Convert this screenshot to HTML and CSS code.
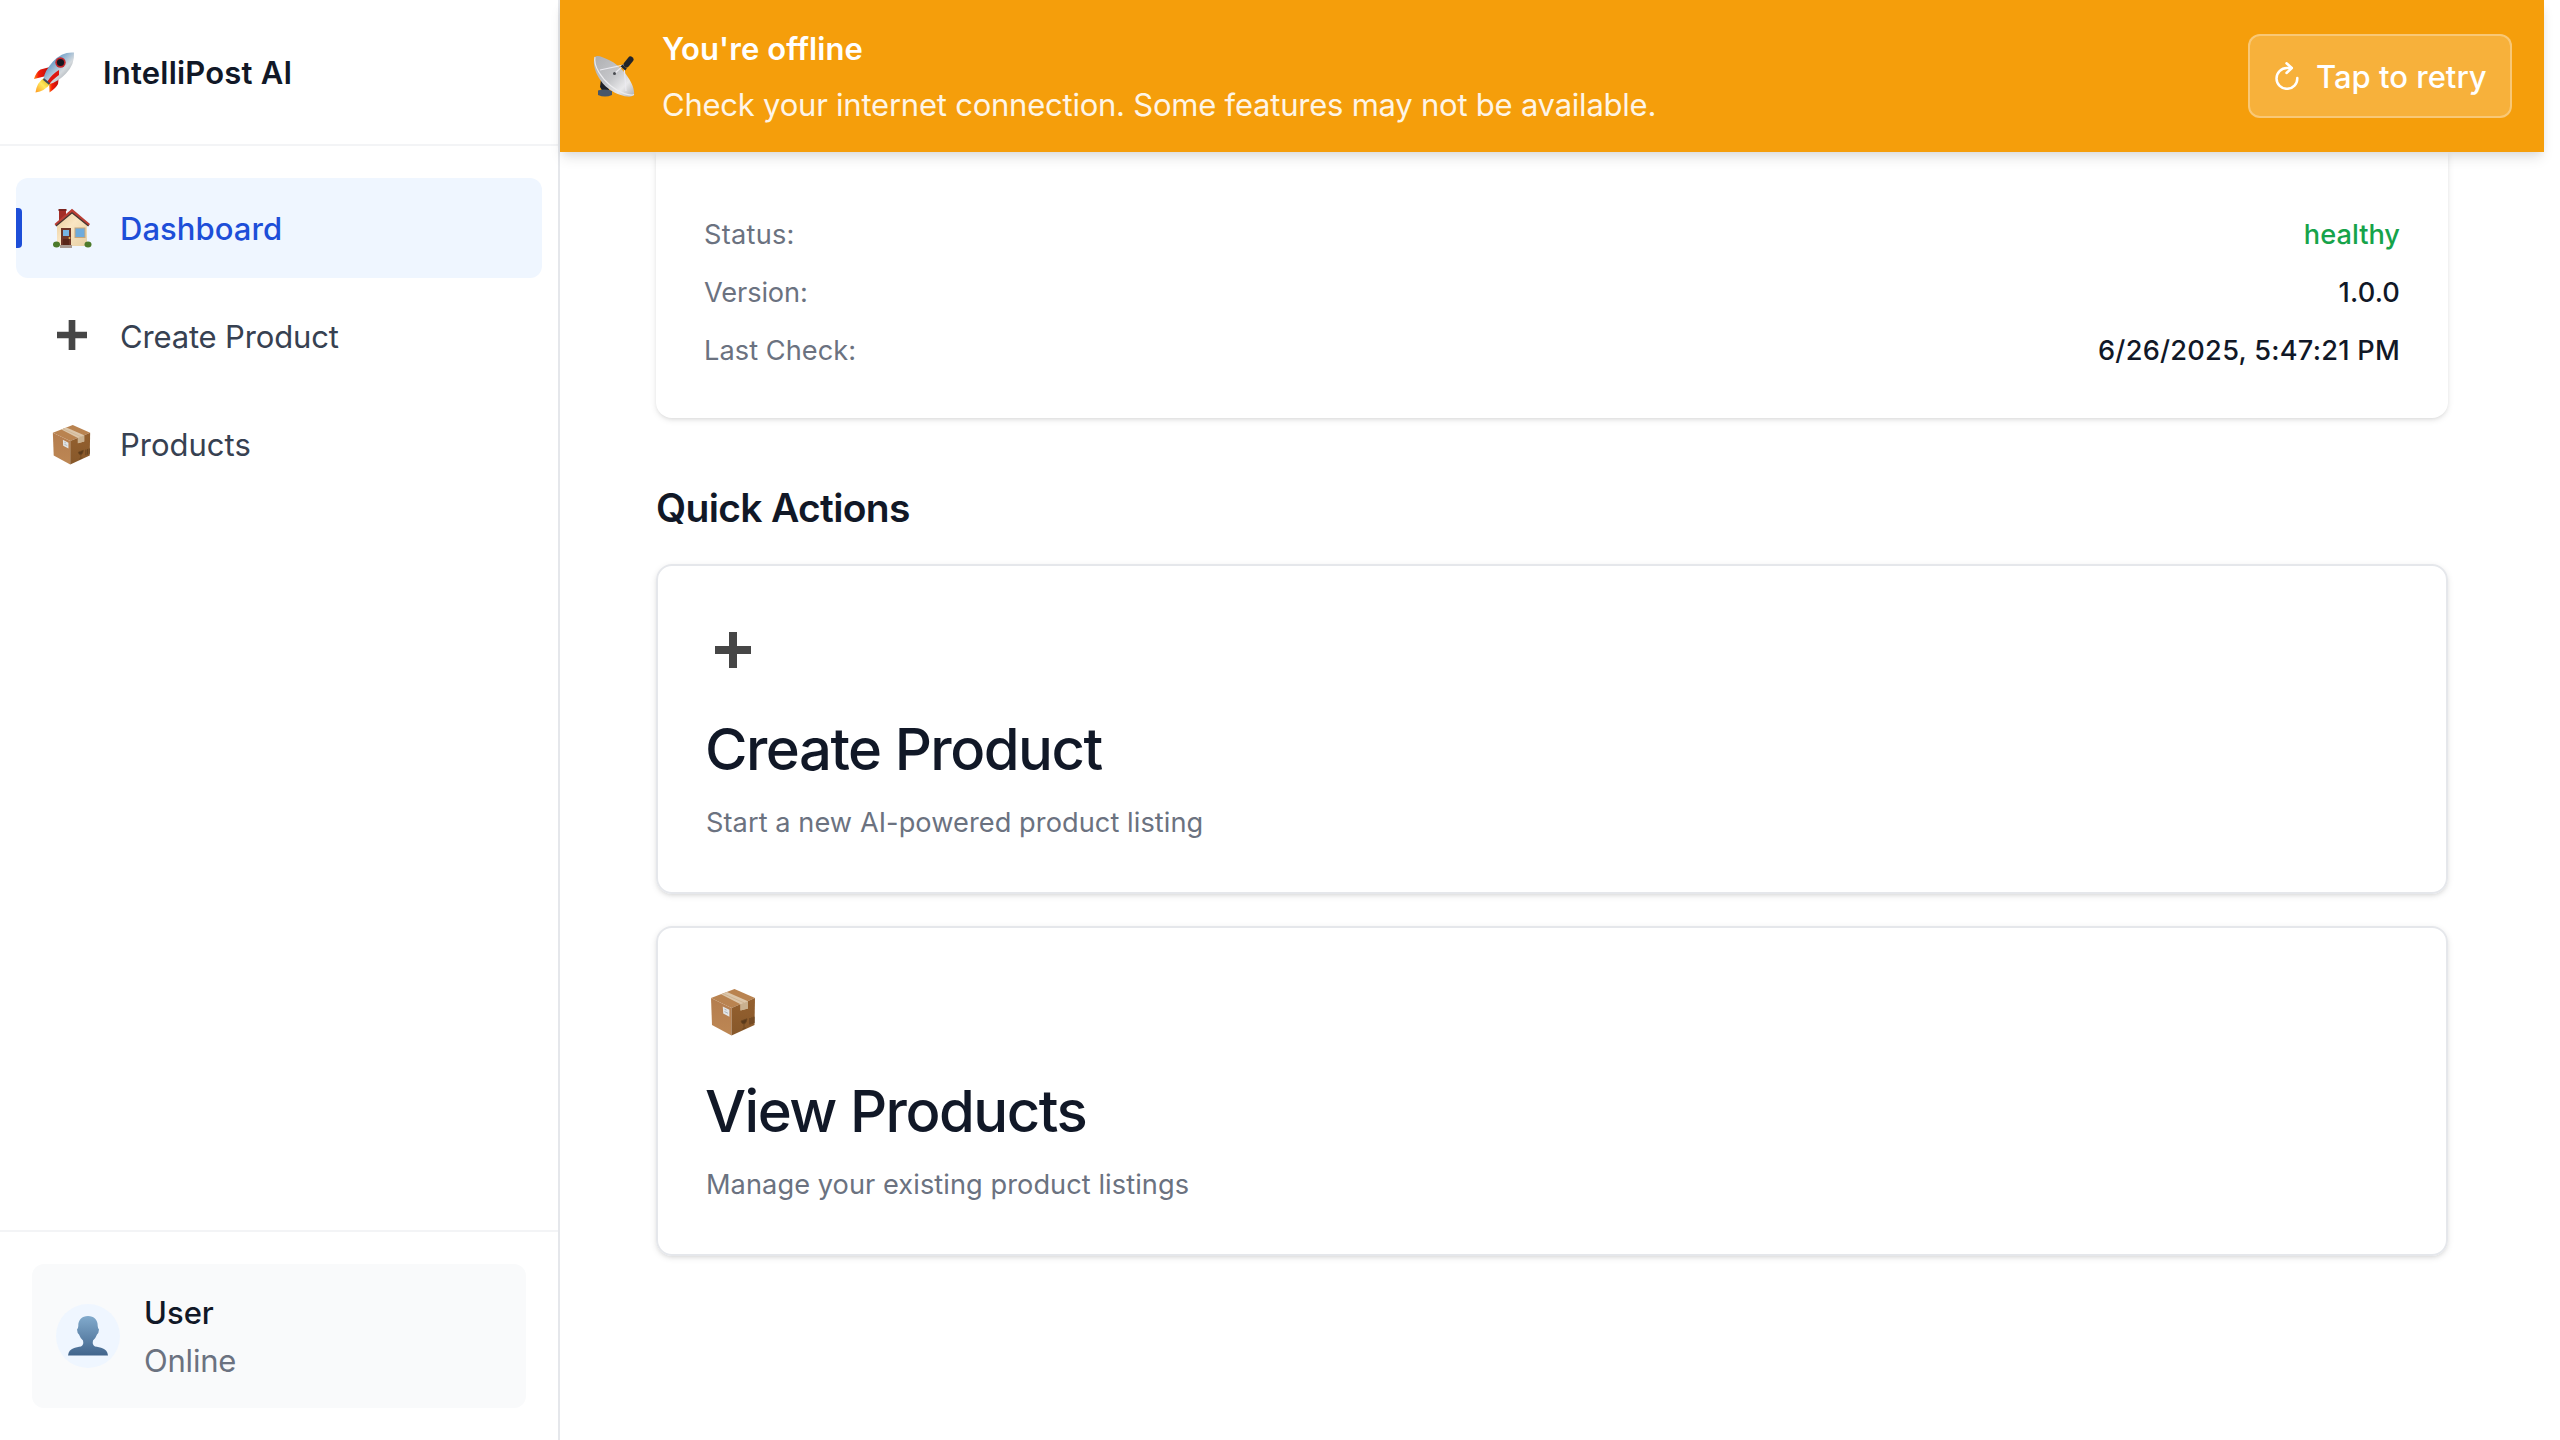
FILE: index.html
```html
<!DOCTYPE html>
<html lang="en">
<head>
<meta charset="utf-8">
<title>IntelliPost AI</title>
<link rel="stylesheet" href="styles.css">
</head>
<body>
<svg class="defs" width="0" height="0" aria-hidden="true">
  <defs>
    <linearGradient id="boxLeft" x1="0" y1="0" x2="0" y2="1"><stop offset="0" stop-color="#b47d4e"/><stop offset="1" stop-color="#bd8754"/></linearGradient>
    <linearGradient id="boxRight" x1="0" y1="0" x2="0" y2="1"><stop offset="0" stop-color="#94602f"/><stop offset="1" stop-color="#87582a"/></linearGradient>
    <linearGradient id="person" x1="0" y1="0" x2="0" y2="1"><stop offset="0" stop-color="#82abcd"/><stop offset="1" stop-color="#42658c"/></linearGradient>
    <linearGradient id="hull" x1="0" y1="0" x2="1" y2="1"><stop offset="0" stop-color="#3d78ae"/><stop offset=".35" stop-color="#7fa9cd"/><stop offset=".6" stop-color="#d5dade"/><stop offset="1" stop-color="#7f868d"/></linearGradient>
    <linearGradient id="fin" x1="0" y1="0" x2="1" y2="0"><stop offset="0" stop-color="#ff8a1a"/><stop offset=".3" stop-color="#f51a08"/><stop offset="1" stop-color="#b50d0d"/></linearGradient>
    <linearGradient id="flame" x1="1" y1="0" x2="0" y2="1"><stop offset="0" stop-color="#d9a400"/><stop offset=".5" stop-color="#ffe95e"/><stop offset="1" stop-color="#ff9a1f"/></linearGradient>
    <linearGradient id="dish" x1="0" y1="0" x2="1" y2="1"><stop offset="0" stop-color="#adaeb1"/><stop offset=".5" stop-color="#c6c7ca"/><stop offset=".75" stop-color="#e9e9eb"/><stop offset="1" stop-color="#aeafb2"/></linearGradient>
    <linearGradient id="wall" x1="0" y1="0" x2="1" y2="1"><stop offset="0" stop-color="#e5c896"/><stop offset=".45" stop-color="#fae6c3"/><stop offset="1" stop-color="#e6cfa4"/></linearGradient>
    <symbol id="i-box" viewBox="0 0 46 48">
      <path d="M1 10 24.5 1 45 10 21.5 20Z" fill="#b98350"/>
      <path d="M1 10 21.5 20V47.5L2 37Z" fill="url(#boxLeft)"/>
      <path d="M21.5 20 45 10 44.5 37 21.5 47.5Z" fill="url(#boxRight)"/>
      <path d="M11 6.3 17 4 38 13.2V20.5L30.5 22.5V16.2Z" fill="#dcc6aa"/>
      <path d="M30.5 16.2 38 13.2V20.5L30.5 22.6Z" fill="#c9b08f"/>
      <path d="M13 5.5 34 14.8" stroke="#cbb08e" stroke-width=".8" fill="none"/>
      <path d="M12.8 18.5 19.4 21.8V28.8L13.2 25.5Z" fill="#e3e5e6"/>
      <path d="M14.5 21.2 16.5 22.2M14.5 23.6 18 25.3" stroke="#9aa7b0" stroke-width=".8"/>
      <path d="M31 33 37 30.8Q36.5 35.5 34 36Q31.5 36 31 33ZM34 36V40.5M32 41.3 36 39.7" fill="#5a3a1b" stroke="#6b451f" stroke-width=".8"/>
      <path d="M40 30V36.6M42 29.3V36M44 28.7V35" stroke="#5f3d1c" stroke-width="1"/>
    </symbol>
    <symbol id="i-plus" viewBox="0 0 36 36">
      <path d="M14 0H22V14H36V22H22V36H14V22H0V14H14Z" fill="#464646"/>
    </symbol>
  </defs>
</svg>
<div class="app">
  <aside class="sidebar">
    <header class="brand">
      <svg class="brand-icon" viewBox="0 0 44 44">
        <path d="M18 17 8.5 19.5Q4 22 2 29L14 26Z" fill="url(#fin)"/>
        <path d="M27 25 26 34Q24 38 17.5 42.5L17 31Z" fill="url(#fin)"/>
        <path d="M12 28Q5 32 3.5 42.5Q13 41 18 34Z" fill="url(#flame)"/>
        <path d="M42 2.500Q30 1.500 21 11.500Q12.500 21 11.500 29L17.500 34Q26 32 34 23.500Q43 14 42 2.500Z" fill="url(#hull)"/>
        <path d="M27 20Q20 24 15 32L17.500 34Q20 30 27 25Z" fill="#df1710"/>
        <path d="M11.500 29 17.500 34" stroke="#3f4a57" stroke-width="2"/>
        <circle cx="28.500" cy="12.500" r="5.200" fill="#c3262c"/>
        <circle cx="28.500" cy="12.500" r="3.600" fill="#14161f"/>
      </svg>
      <span class="brand-name">IntelliPost AI</span>
    </header>
    <nav class="nav">
      <a class="nav-item active">
        <span class="nav-icon">
          <svg width="40" height="40" viewBox="0 0 40 40">
            <path d="M7 2H14V13L7 18Z" fill="#a32e27"/><path d="M6.500 1H14.500V3H6.500Z" fill="#7c241f"/>
            <path d="M5 17 20 3 35 17V38H5Z" fill="url(#wall)"/>
            <path d="M2.500 16 20 .8 38 16 36.500 18 20 4.800 4 18Z" fill="#b93e34"/>
            <path d="M4 18 20 4.800 36.500 18" fill="none" stroke="#443531" stroke-width="1.300"/>
            <rect x="9" y="20" width="10" height="19" fill="#6e3527"/><rect x="11" y="22" width="6" height="6" fill="#75b4e2"/><rect x="11" y="31" width="6" height="6" fill="#582619"/><circle cx="17.500" cy="30" r="1" fill="#e8b94e"/>
            <rect x="22.500" y="19.500" width="11" height="10.500" fill="#c6a57a"/><rect x="23.500" y="20.500" width="9" height="8.500" fill="#6eabdc"/>
            <path d="M8 37H20V40H8Z" fill="#a89a91"/>
            <ellipse cx="4.500" cy="36.500" rx="3.500" ry="3" fill="#4c7a2b"/><ellipse cx="36" cy="36.500" rx="3.500" ry="3" fill="#4c7a2b"/>
          </svg>
        </span>
        <span class="nav-label dashboard">Dashboard</span>
      </a>
      <a class="nav-item">
        <span class="nav-icon raised"><svg width="30" height="30"><use href="#i-plus"/></svg></span>
        <span class="nav-label create">Create Product</span>
      </a>
      <a class="nav-item">
        <span class="nav-icon"><svg width="39" height="41"><use href="#i-box"/></svg></span>
        <span class="nav-label">Products</span>
      </a>
    </nav>
    <footer class="account">
      <div class="user-card">
        <span class="avatar">
          <svg width="40" height="40" viewBox="0 0 40 40"><path d="M20 0C26 0 30 4 29.700 10Q29.800 12 31 13.500Q30.800 17 29 18.500Q27.500 22.500 25 24.500Q24 29 27 30.500C32 31.500 39 31.500 40 39.500H0C1 31.500 8 31.500 13 30.500Q16 29 15 24.500Q12.500 22.500 11 18.500Q9.200 17 9 13.500Q10.200 12 10.300 10C10 4 14 0 20 0Z" fill="url(#person)"/></svg>
        </span>
        <div class="user-text">
          <div class="user-name">User</div>
          <div class="user-state">Online</div>
        </div>
      </div>
    </footer>
  </aside>
  <main class="main">
    <section class="banner">
      <svg class="banner-icon" viewBox="0 0 44 44">
        <path d="M9 25 15 30 18 38H11L8 33Z" fill="#1d2027"/>
        <path d="M6 36.500Q13 34.500 20 37V41Q13 44 6 41Z" fill="#46566a"/>
        <path d="M3 3C-1 11 6 27 17 35C28 43 41 44.500 42 40.500C43.500 30 30 12 17 6C10 2.500 5 .5 3 3Z" fill="url(#dish)"/>
        <path d="M3 3C1 12 10 25 19 32C28 39 38 42.500 42 40.500" fill="none" stroke="#ececee" stroke-width="1.200"/>
        <path d="M8 16 32 11 34 37M32 11 22 20" fill="none" stroke="#ebeaf0" stroke-width="1.100"/>
        <circle cx="22.500" cy="19.500" r="1.500" fill="#494b50"/>
        <path d="M29.500 11.500 34 15.500" stroke="#22242a" stroke-width="2.500"/>
        <path d="M34.500 10.500 38.500 5.500" stroke="#22242a" stroke-width="6" stroke-linecap="round"/>
      </svg>
      <div class="banner-text">
        <div class="banner-title">You're offline</div>
        <div class="banner-message">Check your internet connection. Some features may not be available.</div>
      </div>
      <button class="retry">
        <svg class="retry-icon" viewBox="0 0 24 28" fill="none" stroke="#fff" stroke-width="2.500" stroke-linecap="round" stroke-linejoin="round"><path d="M22.300 16A10.400 10.400 0 1 1 12 6H16.500"/><path d="M11.500 1.300 16.800 6 11.500 11"/></svg>
        <span class="retry-label">Tap to retry</span>
      </button>
    </section>
    <div class="content">
      <section class="health">
        <div class="row"><span class="key status">Status:</span><span class="value ok">healthy</span></div>
        <div class="row"><span class="key version">Version:</span><span class="value number">1.0.0</span></div>
        <div class="row"><span class="key check">Last Check:</span><span class="value date">6/26/2025, 5:47:21 PM</span></div>
      </section>
      <h2 class="heading">Quick Actions</h2>
      <div class="actions">
        <a class="card">
          <span class="card-icon"><svg width="36" height="36"><use href="#i-plus"/></svg></span>
          <h3 class="card-title">Create Product</h3>
          <p class="card-text">Start a new AI-powered product listing</p>
        </a>
        <a class="card">
          <span class="card-icon"><svg width="46" height="48"><use href="#i-box"/></svg></span>
          <h3 class="card-title">View Products</h3>
          <p class="card-text">Manage your existing product listings</p>
        </a>
      </div>
    </div>
  </main>
</div>
</body>
</html>
```
FILE: styles.css
```css
* { box-sizing: border-box; }

body {
  margin: 0;
  background: #fff;
  color: #111827;
  font-family: Inter, "Liberation Sans", sans-serif;
  font-size: 31px;
  line-height: 48px;
}

.defs { display: block; }

.app {
  display: flex;
  width: 2560px;
  height: 1440px;
  overflow: hidden;
  padding-right: 16px;
}

/* Sidebar */
.sidebar {
  display: flex;
  flex-direction: column;
  width: 560px;
  flex: none;
  border-right: 2px solid #e5e7eb;
}

.brand {
  display: flex;
  align-items: center;
  gap: 26px;
  height: 146px;
  padding: 0 32px;
  border-bottom: 2px solid #f3f4f6;
}

.brand-icon { width: 44px; height: 44px; }

.brand-name {
  padding: 1px 0 0 1px;
  font-weight: 600;
  letter-spacing: .2px;
}

.nav {
  display: flex;
  flex-direction: column;
  flex: 1;
  gap: 8px;
  padding: 32px 16px;
}

.nav-item {
  position: relative;
  display: flex;
  align-items: center;
  gap: 24px;
  height: 100px;
  padding: 0 32px;
  border-radius: 12px;
  color: #374151;
}

.nav-item.active {
  background: #eff6ff;
  color: #1d4ed8;
}

.nav-item.active::before {
  content: "";
  position: absolute;
  left: 0;
  top: 30px;
  width: 6px;
  height: 40px;
  border-radius: 0 4px 4px 0;
  background: #1d4ed8;
}

.nav-icon {
  display: flex;
  align-items: center;
  justify-content: center;
  width: 47px;
}

.nav-icon.raised { padding-bottom: 2px; }

.nav-label { padding: 2px 0 0 1px; }
.nav-label.dashboard { font-weight: 500; letter-spacing: .05px; }
.nav-label.create { letter-spacing: -.16px; }

.account {
  padding: 32px;
  border-top: 2px solid #f3f4f6;
}

.user-card {
  display: flex;
  align-items: center;
  gap: 24px;
  height: 144px;
  padding: 0 24px;
  border-radius: 12px;
  background: #f9fafb;
}

.avatar {
  display: flex;
  align-items: center;
  justify-content: center;
  width: 64px;
  height: 64px;
  border-radius: 50%;
  background: #eff6ff;
}

.user-text { padding-top: 2px; }
.user-name { font-weight: 500; }
.user-state { color: #6b7280; letter-spacing: -.2px; }

/* Main column */
.main {
  flex: 1;
  min-width: 0;
  background: #fff;
}

.banner {
  position: relative;
  z-index: 1;
  display: flex;
  align-items: center;
  height: 152px;
  padding: 0 32px;
  background: #f59e0b;
  box-shadow: 0 8px 12px -2px rgba(0, 0, 0, .1), 0 4px 8px -2px rgba(0, 0, 0, .06);
  color: #fff;
}

.banner-icon { width: 44px; height: 44px; }

.banner-text {
  display: flex;
  flex-direction: column;
  flex: 1;
  gap: 8px;
  padding: 1px 0 0 26px;
}

.banner-title { font-weight: 600; letter-spacing: .06px; }
.banner-message { letter-spacing: -.23px; opacity: .9; }

.retry {
  display: flex;
  align-items: center;
  gap: 17px;
  width: 264px;
  height: 84px;
  padding: 0 0 0 25px;
  border: 2px solid rgba(255, 255, 255, .3);
  border-radius: 12px;
  background: rgba(255, 255, 255, .2);
  color: #fff;
  font: 500 31px/48px Inter, "Liberation Sans", sans-serif;
}

.retry-icon { width: 24px; height: 28px; }
.retry-label { padding-top: 1px; }

.content { padding: 0 96px; }

.health {
  display: flex;
  flex-direction: column;
  gap: 16px;
  padding: 62px 48px 46px;
  border-radius: 0 0 16px 16px;
  box-shadow: 0 2px 6px rgba(0, 0, 0, .1), 0 2px 4px -2px rgba(0, 0, 0, .1);
}

.row {
  display: flex;
  justify-content: space-between;
  font-size: 27.2px;
  line-height: 42px;
}

.key { color: #6b7280; }
.key.status { letter-spacing: .25px; }
.key.version { letter-spacing: -.109px; }
.key.check { letter-spacing: .05px; }

.value { font-weight: 500; }
.value.ok { color: #16a34a; }
.value.number { letter-spacing: .15px; }
.value.date { letter-spacing: .25px; }

.heading {
  margin: 65px 0 31px;
  font-size: 39px;
  font-weight: 600;
  line-height: 50px;
  letter-spacing: -.68px;
}

.actions {
  display: flex;
  flex-direction: column;
  gap: 32px;
}

.card {
  display: flex;
  flex-direction: column;
  height: 330px;
  padding: 48px;
  border: 2px solid #e5e7eb;
  border-radius: 16px;
  box-shadow: 0 2px 6px rgba(0, 0, 0, .1), 0 2px 4px -2px rgba(0, 0, 0, .1);
}

.card-icon {
  display: flex;
  align-items: center;
  justify-content: center;
  width: 54px;
  height: 72px;
}

.card-title {
  margin: 17px 0 7px -1px;
  font-size: 58px;
  font-weight: 500;
  line-height: 92px;
  letter-spacing: -1.5px;
}

.card-text {
  margin: 0;
  color: #6b7280;
  font-size: 27.2px;
  line-height: 42px;
  letter-spacing: .06px;
}
```
